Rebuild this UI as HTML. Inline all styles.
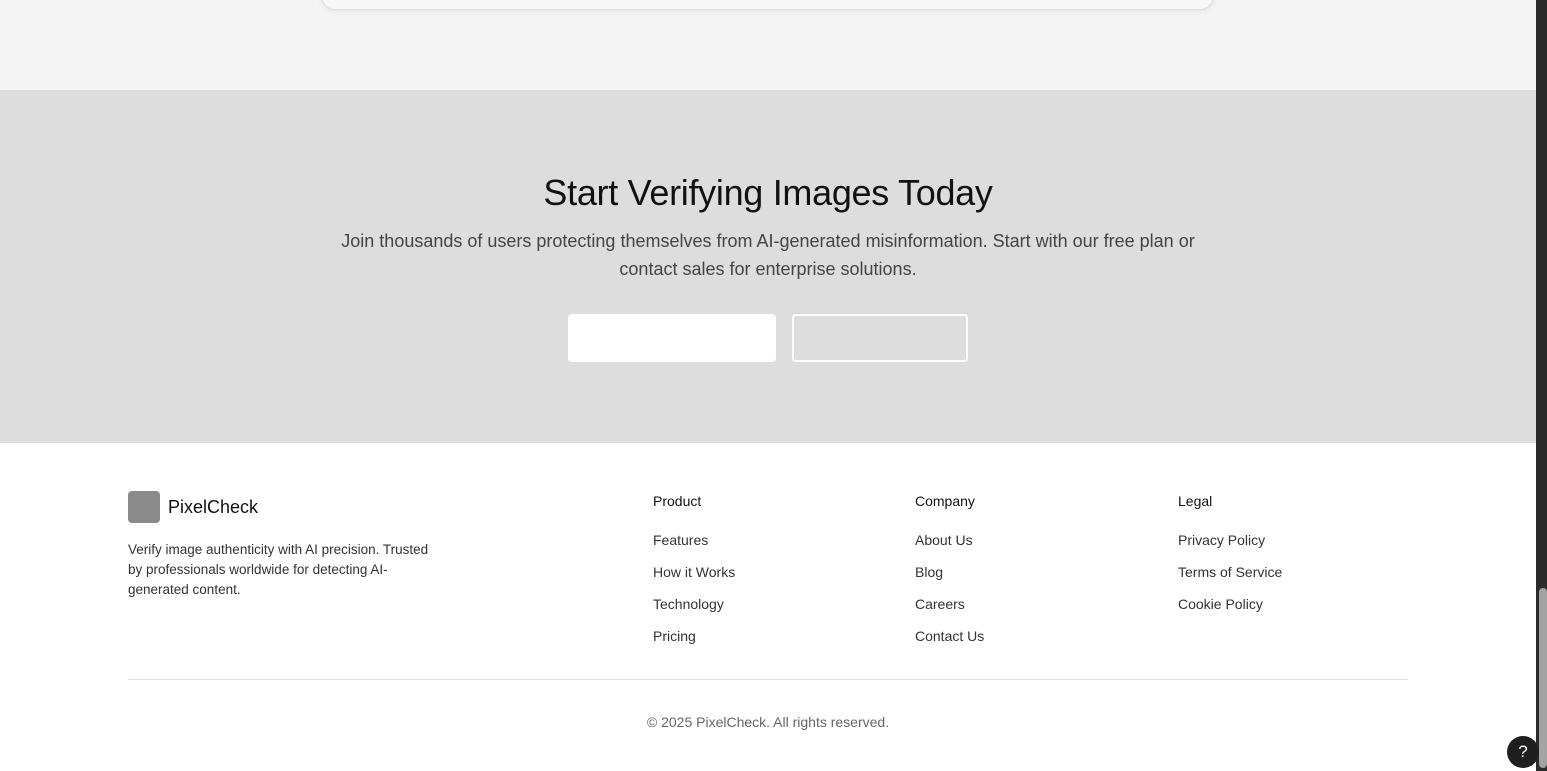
<!DOCTYPE html>
<html><head><style>
*{margin:0;padding:0;box-sizing:border-box}
body{width:1547px;height:771px;overflow:hidden;font-family:"Liberation Sans",sans-serif;background:#fff;position:relative;color:#222}
.top{position:absolute;left:0;top:0;width:1536px;height:90px;background:#f4f4f4}
.card{position:absolute;left:321px;top:-30px;width:893px;height:40px;border:1px solid #dcdcdc;border-radius:14px;background:#f7f7f7;box-shadow:0 2px 6px rgba(0,0,0,.06)}
.cta{position:absolute;left:0;top:90px;width:1536px;height:353px;background:#dddddd;text-align:center}
.cta h2{position:absolute;top:82px;width:100%;font-size:36px;font-weight:400;color:#111;letter-spacing:-0.3px}
.cta p{position:absolute;top:137px;left:0;width:100%;font-size:18px;line-height:28px;color:#444}
.b1{position:absolute;left:568px;top:224px;width:208px;height:48px;background:#fff;border-radius:4px}
.b2{position:absolute;left:792px;top:224px;width:176px;height:48px;border:2px solid #fff;border-radius:4px}
.logo{position:absolute;left:128px;top:491px;width:32px;height:32px;background:#8a8a8a;border-radius:4px}
.brand{position:absolute;left:168px;top:497px;font-size:18px;color:#111}
.desc{position:absolute;left:128px;top:540px;width:312px;font-size:13.5px;line-height:20px;color:#333}
.col{position:absolute;top:493px;font-size:14px;color:#333}
.col h4{font-weight:400;color:#111;margin-bottom:23px;font-size:14px}
.col div{height:32px}
.hr{position:absolute;left:128px;top:679px;width:1280px;height:1px;background:#ddd}
.copy{position:absolute;top:714px;left:0;width:1536px;text-align:center;font-size:14px;color:#666}
.sb{position:absolute;left:1536px;top:0;width:11px;height:771px;background:#2b2b2b}
.th{position:absolute;left:1539px;top:588px;width:8px;height:180px;background:#a3a3a3;border-radius:4px}
.help{position:absolute;left:1507px;top:736px;width:32px;height:32px;border-radius:50%;background:#1f1f1f;color:#fff;text-align:center;line-height:32px;font-size:17px}
</style></head><body>
<div class="top"><div class="card"></div></div>
<div class="cta">
<h2>Start Verifying Images Today</h2>
<p>Join thousands of users protecting themselves from AI-generated misinformation. Start with our free plan or<br>contact sales for enterprise solutions.</p>
<div class="b1"></div><div class="b2"></div>
</div>
<div class="logo"></div><div class="brand">PixelCheck</div>
<div class="desc">Verify image authenticity with AI precision. Trusted by professionals worldwide for detecting AI-generated content.</div>
<div class="col" style="left:653px"><h4>Product</h4><div>Features</div><div>How it Works</div><div>Technology</div><div>Pricing</div></div>
<div class="col" style="left:915px"><h4>Company</h4><div>About Us</div><div>Blog</div><div>Careers</div><div>Contact Us</div></div>
<div class="col" style="left:1178px"><h4>Legal</h4><div>Privacy Policy</div><div>Terms of Service</div><div>Cookie Policy</div></div>
<div class="hr"></div>
<div class="copy">© 2025 PixelCheck. All rights reserved.</div>
<div class="sb"></div><div class="th"></div>
<div class="help">?</div>
</body></html>
